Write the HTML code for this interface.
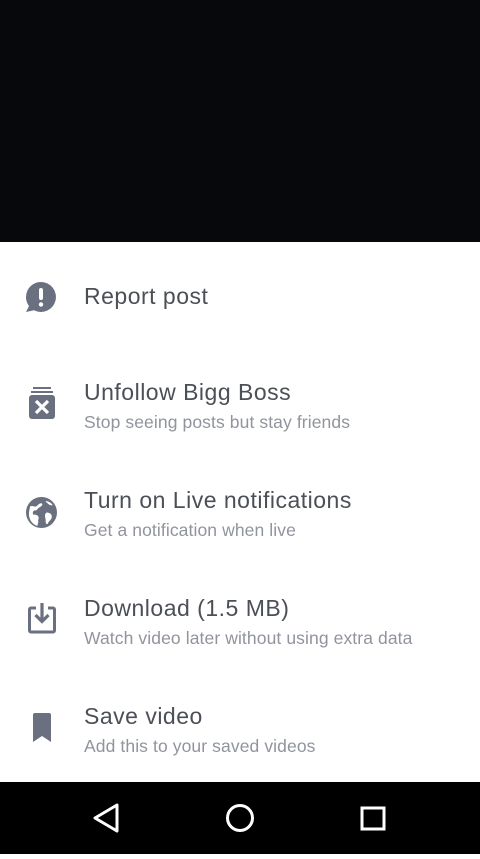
<!DOCTYPE html><html><head><style>
body{margin:0;width:480px;height:854px;position:relative;background:#fff;font-family:"Liberation Sans",sans-serif;overflow:hidden}
.top{position:absolute;left:0;top:0;width:480px;height:242px;background:#06080c}
.nav{position:absolute;left:0;top:782px;width:480px;height:72px;background:#000}
.t{position:absolute;left:84px;font-size:23px;letter-spacing:0.5px;color:#4b4f56;white-space:nowrap}
.s{position:absolute;left:84px;font-size:17.5px;letter-spacing:0.1px;color:#90949c;white-space:nowrap}
svg.i{position:absolute}
</style></head><body>
<div class="top"></div>
<svg class="i" style="left:25px;top:281px" width="32" height="32" viewBox="0 0 32 32"><path d="M16 1a15 15 0 1 1-7 28.3L1 31l3-6A15 15 0 0 1 16 1z" fill="#6b7080"/><rect x="14" y="7" width="4" height="12" rx="2" fill="#fff"/><circle cx="16" cy="23.5" r="2.2" fill="#fff"/></svg>
<div class="t" style="top:283px">Report post</div>
<svg class="i" style="left:28px;top:387px" width="28" height="33" viewBox="0 0 28 33"><rect x="5" y="0" width="18" height="2" fill="#6b7080"/><rect x="3" y="4" width="22" height="2" fill="#6b7080"/><rect x="1" y="8" width="26" height="24" rx="3" fill="#6b7080"/><path d="M8 14l12 12M20 14L8 26" stroke="#fff" stroke-width="3.2"/></svg>
<div class="t" style="top:379px">Unfollow Bigg Boss</div>
<div class="s" style="top:412px">Stop seeing posts but stay friends</div>
<svg class="i" style="left:26px;top:497px" width="31" height="31" viewBox="0 0 30 30"><circle cx="15" cy="15" r="15" fill="#6b7080"/><path d="M4 9c3-1 4 1 6 0s2-3 5-3c2 1 0 3-2 4s-2 3-4 3-3 2-2 4c2 0 4 0 5 2s-1 3 0 5l-1 4C5 26 2 20 3 14z M20 15c2 0 5 1 5 4s-3 4-4 7c-2 1-2-2-2-4s-2-5 1-7z M19 4c2 0 5 1 7 4-2 0-3 0-4-1s-3-2-3-3z" fill="#fff"/></svg>
<div class="t" style="top:487px">Turn on Live notifications</div>
<div class="s" style="top:520px">Get a notification when live</div>
<svg class="i" style="left:28px;top:600px" width="28" height="34" viewBox="0 0 28 34"><path d="M8 8H3a1.5 1.5 0 0 0-1.5 1.5v21A1.5 1.5 0 0 0 3 32h22a1.5 1.5 0 0 0 1.5-1.5v-21A1.5 1.5 0 0 0 25 8h-5" fill="none" stroke="#6b7080" stroke-width="3"/><path d="M14 3v18M7.5 15l6.5 6.5 6.5-6.5" fill="none" stroke="#6b7080" stroke-width="3.2"/></svg>
<div class="t" style="top:595px">Download (1.5 MB)</div>
<div class="s" style="top:628px">Watch video later without using extra data</div>
<svg class="i" style="left:33px;top:713px" width="18" height="29" viewBox="0 0 18 29"><path d="M2 0h14a2 2 0 0 1 2 2v27l-9-6-9 6V2a2 2 0 0 1 2-2z" fill="#6b7080"/></svg>
<div class="t" style="top:703px">Save video</div>
<div class="s" style="top:736px">Add this to your saved videos</div>
<div class="nav"><svg width="480" height="72"><path d="M117 23L95 36l22 13z" fill="none" stroke="#fff" stroke-width="3" stroke-linejoin="round"/><circle cx="240" cy="36" r="12.5" fill="none" stroke="#fff" stroke-width="3"/><rect x="362" y="26" width="22" height="21" fill="none" stroke="#fff" stroke-width="3"/></svg></div>
</body></html>
